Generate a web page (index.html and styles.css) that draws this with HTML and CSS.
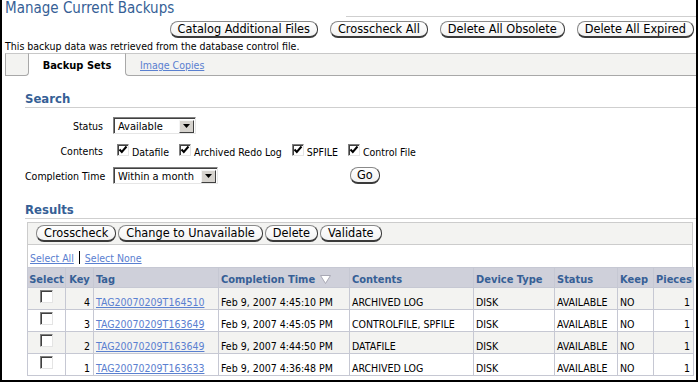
FILE: index.html
```html
<!DOCTYPE html>
<html lang="en">
<head>
<meta charset="utf-8">
<title>Manage Current Backups</title>
<link rel="stylesheet" href="styles.css">
</head>
<body>
<div class="frame">
  <div class="page-header">
    <h1 class="title">Manage Current Backups</h1>
    <div class="header-rule"></div>
  </div>
  <div class="actions">
    <button class="btn" type="button">Catalog Additional Files</button>
    <button class="btn" type="button">Crosscheck All</button>
    <button class="btn" type="button">Delete All Obsolete</button>
    <button class="btn" type="button">Delete All Expired</button>
  </div>
  <p class="info">This backup data was retrieved from the database control file.</p>
  <div class="tabs">
    <div class="tab-spacer"></div>
    <div class="tab tab-active">Backup Sets</div>
    <div class="tab tab-rest"><a href="#" class="link">Image Copies</a></div>
  </div>

  <div class="content">
    <h2 class="section">Search</h2>
    <div class="form">
      <div class="label">Status</div>
      <div class="control">
        <span class="select select-status"><span class="select-text">Available</span><span class="select-arrow"><svg width="7" height="4" viewBox="0 0 7 4"><polygon points="0,0 7,0 3.5,4" fill="#000"/></svg></span></span>
      </div>
      <div class="label">Contents</div>
      <div class="control checks">
        <span class="check-item"><span class="cb"><svg width="10" height="10" viewBox="0 0 10 10"><polyline points="1.5,4.5 3.8,7 8.5,1.5" fill="none" stroke="#000" stroke-width="2"/></svg></span>Datafile</span>
        <span class="check-item"><span class="cb"><svg width="10" height="10" viewBox="0 0 10 10"><polyline points="1.5,4.5 3.8,7 8.5,1.5" fill="none" stroke="#000" stroke-width="2"/></svg></span>Archived Redo Log</span>
        <span class="check-item"><span class="cb"><svg width="10" height="10" viewBox="0 0 10 10"><polyline points="1.5,4.5 3.8,7 8.5,1.5" fill="none" stroke="#000" stroke-width="2"/></svg></span>SPFILE</span>
        <span class="check-item"><span class="cb"><svg width="10" height="10" viewBox="0 0 10 10"><polyline points="1.5,4.5 3.8,7 8.5,1.5" fill="none" stroke="#000" stroke-width="2"/></svg></span>Control File</span>
      </div>
      <div class="label">Completion Time</div>
      <div class="control">
        <span class="select select-time"><span class="select-text">Within a month</span><span class="select-arrow"><svg width="7" height="4" viewBox="0 0 7 4"><polygon points="0,0 7,0 3.5,4" fill="#000"/></svg></span></span>
        <button class="btn btn-go" type="button">Go</button>
      </div>
    </div>

    <h2 class="section section-results">Results</h2>
    <div class="results">
      <div class="toolbar">
        <button class="btn" type="button">Crosscheck</button>
        <button class="btn" type="button">Change to Unavailable</button>
        <button class="btn" type="button">Delete</button>
        <button class="btn" type="button">Validate</button>
      </div>
      <div class="select-links">
        <a href="#" class="link">Select All</a><span class="sep"></span><a href="#" class="link">Select None</a>
      </div>
      <table class="grid">
        <colgroup>
          <col class="c-select"><col class="c-key"><col class="c-tag"><col class="c-time"><col class="c-contents"><col class="c-device"><col class="c-status"><col class="c-keep"><col class="c-pieces">
        </colgroup>
        <thead>
          <tr>
            <th class="center">Select</th>
            <th class="center">Key</th>
            <th>Tag</th>
            <th>Completion Time <svg class="sort" width="11" height="9" viewBox="0 0 11 9"><polygon points="0.5,0.5 10.5,0.5 5.5,8.5" fill="#fff" stroke="#a8a8b4" stroke-width="1"/></svg></th>
            <th>Contents</th>
            <th>Device Type</th>
            <th>Status</th>
            <th>Keep</th>
            <th>Pieces</th>
          </tr>
        </thead>
        <tbody>
          <tr class="odd">
            <td class="cell-cb"><span class="cb cb-empty"></span></td>
            <td class="num">4</td>
            <td><a href="#" class="link">TAG20070209T164510</a></td>
            <td>Feb 9, 2007 4:45:10 PM</td>
            <td>ARCHIVED LOG</td>
            <td>DISK</td>
            <td>AVAILABLE</td>
            <td>NO</td>
            <td class="num">1</td>
          </tr>
          <tr>
            <td class="cell-cb"><span class="cb cb-empty"></span></td>
            <td class="num">3</td>
            <td><a href="#" class="link">TAG20070209T163649</a></td>
            <td>Feb 9, 2007 4:45:05 PM</td>
            <td>CONTROLFILE, SPFILE</td>
            <td>DISK</td>
            <td>AVAILABLE</td>
            <td>NO</td>
            <td class="num">1</td>
          </tr>
          <tr class="odd">
            <td class="cell-cb"><span class="cb cb-empty"></span></td>
            <td class="num">2</td>
            <td><a href="#" class="link">TAG20070209T163649</a></td>
            <td>Feb 9, 2007 4:44:50 PM</td>
            <td>DATAFILE</td>
            <td>DISK</td>
            <td>AVAILABLE</td>
            <td>NO</td>
            <td class="num">1</td>
          </tr>
          <tr>
            <td class="cell-cb"><span class="cb cb-empty"></span></td>
            <td class="num">1</td>
            <td><a href="#" class="link">TAG20070209T163633</a></td>
            <td>Feb 9, 2007 4:36:48 PM</td>
            <td>ARCHIVED LOG</td>
            <td>DISK</td>
            <td>AVAILABLE</td>
            <td>NO</td>
            <td class="num">1</td>
          </tr>
        </tbody>
      </table>
    </div>
  </div>
</div>
</body>
</html>
```

FILE: styles.css
```css
* { box-sizing: border-box; }

html, body {
  margin: 0;
  padding: 0;
  background: #fff;
}

body {
  font-family: "DejaVu Sans Condensed", "DejaVu Sans", sans-serif;
  font-stretch: condensed;
  font-size: 10.5px;
  color: #000;
}

.frame {
  width: 698px;
  height: 382px;
  border-left: 2px solid #000;
  border-right: 2px solid #000;
  border-bottom: 2px solid #000;
  overflow: hidden;
}

/* header */
.page-header {
  display: flex;
  align-items: flex-end;
  height: 17px;
  padding-left: 3px;
}
.title {
  margin: 0;
  font-size: 15px;
  font-weight: normal;
  line-height: 17px;
  color: #365f96;
  white-space: nowrap;
}
.header-rule {
  flex: 1;
  margin-left: 172px;
  border-bottom: 1px solid #cfcfcf;
  margin-bottom: 0;
  height: 1px;
}

.actions {
  display: flex;
  justify-content: flex-end;
  gap: 12px;
  margin-top: 4px;
  padding-right: 2px;
}

.btn {
  font-family: inherit;
  font-stretch: condensed;
  font-size: 12.6px;
  line-height: 14px;
  height: 17px;
  padding: 0 7px;
  margin: 0;
  color: #000;
  background: linear-gradient(#ffffff, #f2f2f2);
  border: 1px solid #8a8a8a;
  border-right-color: #3a3a3a;
  border-bottom: 2px solid #3a3a3a;
  border-radius: 8px;
  white-space: nowrap;
}

.info {
  margin: 2px 0 0 3px;
  line-height: 13px;
  height: 13px;
  white-space: nowrap;
}

/* tabs */
.tabs {
  display: flex;
  height: 23px;
  margin-left: 3px;
}
.tab-spacer {
  width: 24px;
  background: #f3f3f1;
  border: 1px solid #a8a8a8;
  border-top-color: #c8c8c8;
  border-bottom-right-radius: 4px;
}
.tab {
  display: flex;
  align-items: center;
  border-top: 1px solid #c8c8c8;
  padding-top: 1px;
}
.tab-active {
  width: 96px;
  justify-content: center;
  font-weight: bold;
  font-size: 11px;
  background: #fff;
}
.tab-rest {
  flex: 1;
  padding-left: 14px;
  background: #f3f3f1;
  border-left: 1px solid #a8a8a8;
  border-bottom: 1px solid #a8a8a8;
  border-bottom-left-radius: 4px;
}

.link {
  color: #5a80d0;
  text-decoration: underline;
}

/* content */
.content {
  padding-left: 23px;
}

.section {
  margin: 14px 0 0;
  font-size: 13px;
  font-weight: bold;
  line-height: 17px;
  height: 18px;
  color: #365f96;
  border-bottom: 1px solid #cfcfcf;
}
.section-results {
  margin-top: 17px;
}

.form {
  display: grid;
  grid-template-columns: 78px auto;
  grid-auto-rows: 17px;
  column-gap: 10px;
  row-gap: 8px;
  margin-top: 9px;
  align-items: center;
}
.label {
  text-align: right;
  white-space: nowrap;
}
.control {
  display: flex;
  align-items: center;
  height: 17px;
}

.select {
  display: inline-flex;
  align-items: center;
  justify-content: space-between;
  height: 17px;
  background: #fff;
  border: 1px solid;
  border-color: #808080 #e6e6e6 #e6e6e6 #808080;
  box-shadow: inset 1px 1px 0 #404040;
  padding: 1px 1px 0 4px;
}
.select-status { width: 83px; }
.select-time { width: 105px; }
.select-text {
  font-size: 11px;
  line-height: 13px;
}
.select-arrow {
  display: flex;
  align-items: center;
  justify-content: center;
  width: 15px;
  height: 13px;
  background: #d6d3ce;
  border: 1px solid;
  border-color: #f4f4f4 #404040 #404040 #f4f4f4;
}

.btn-go {
  margin-left: 132px;
  padding: 0 6px;
}

.checks {
  gap: 0;
}
.check-item {
  display: inline-flex;
  align-items: center;
  margin-left: 4px;
  margin-right: 6px;
  white-space: nowrap;
  padding-top: 3px;
}
.cb {
  display: inline-flex;
  align-items: center;
  justify-content: center;
  width: 12px;
  height: 12px;
  margin-right: 3px;
  margin-top: -4px;
  background: #fff;
  border: 1px solid;
  border-color: #808080 #e4e4e4 #e4e4e4 #808080;
  box-shadow: inset 1px 1px 0 #404040;
}
.cb-empty {
  width: 13px;
  height: 13px;
  margin: 0;
}

/* results */
.results {
  margin: 3px 3px 0 2px;
}
.toolbar {
  display: flex;
  align-items: center;
  gap: 2px;
  height: 23px;
  padding-left: 8px;
  background: #f3f3f1;
  border: 1px solid #cccccc;
}
.toolbar .btn {
  padding: 0 7px;
}
.select-links {
  display: flex;
  align-items: flex-end;
  height: 22px;
  padding: 0 0 3px 2px;
  border-left: 1px solid #cccccc;
  border-right: 1px solid #cccccc;
}
.sep {
  display: inline-block;
  width: 1px;
  height: 13px;
  background: #000;
  margin: 0 5px 0 5px;
}

.grid {
  width: 666px;
  border-collapse: collapse;
  table-layout: fixed;
}
.c-select { width: 38px; }
.c-key { width: 28px; }
.c-tag { width: 125px; }
.c-time { width: 131px; }
.c-contents { width: 124px; }
.c-device { width: 81px; }
.c-status { width: 63px; }
.c-keep { width: 36px; }
.c-pieces { width: 40px; }

.grid th,
.grid td {
  border: 1px solid #c6c8d3;
  text-align: left;
  white-space: nowrap;
  overflow: hidden;
  vertical-align: bottom;
  line-height: 13px;
}
.grid th {
  height: 20px;
  padding: 0 2px 1px 2px;
  font-size: 11px;
  font-weight: bold;
  color: #365f96;
  background: #cfd0da;
}
.grid th.center { text-align: center; padding: 0 0 1px; }
.sort { vertical-align: -1px; margin-left: 1px; }
.grid td {
  height: 22px;
  padding: 0 3px 0 2px;
}
.grid tr.odd td { background: #f3f3f1; }
.grid td.num { text-align: right; padding-right: 3px; }
.grid td.cell-cb {
  vertical-align: top;
  text-align: center;
  padding: 2px 0 0;
}
```
